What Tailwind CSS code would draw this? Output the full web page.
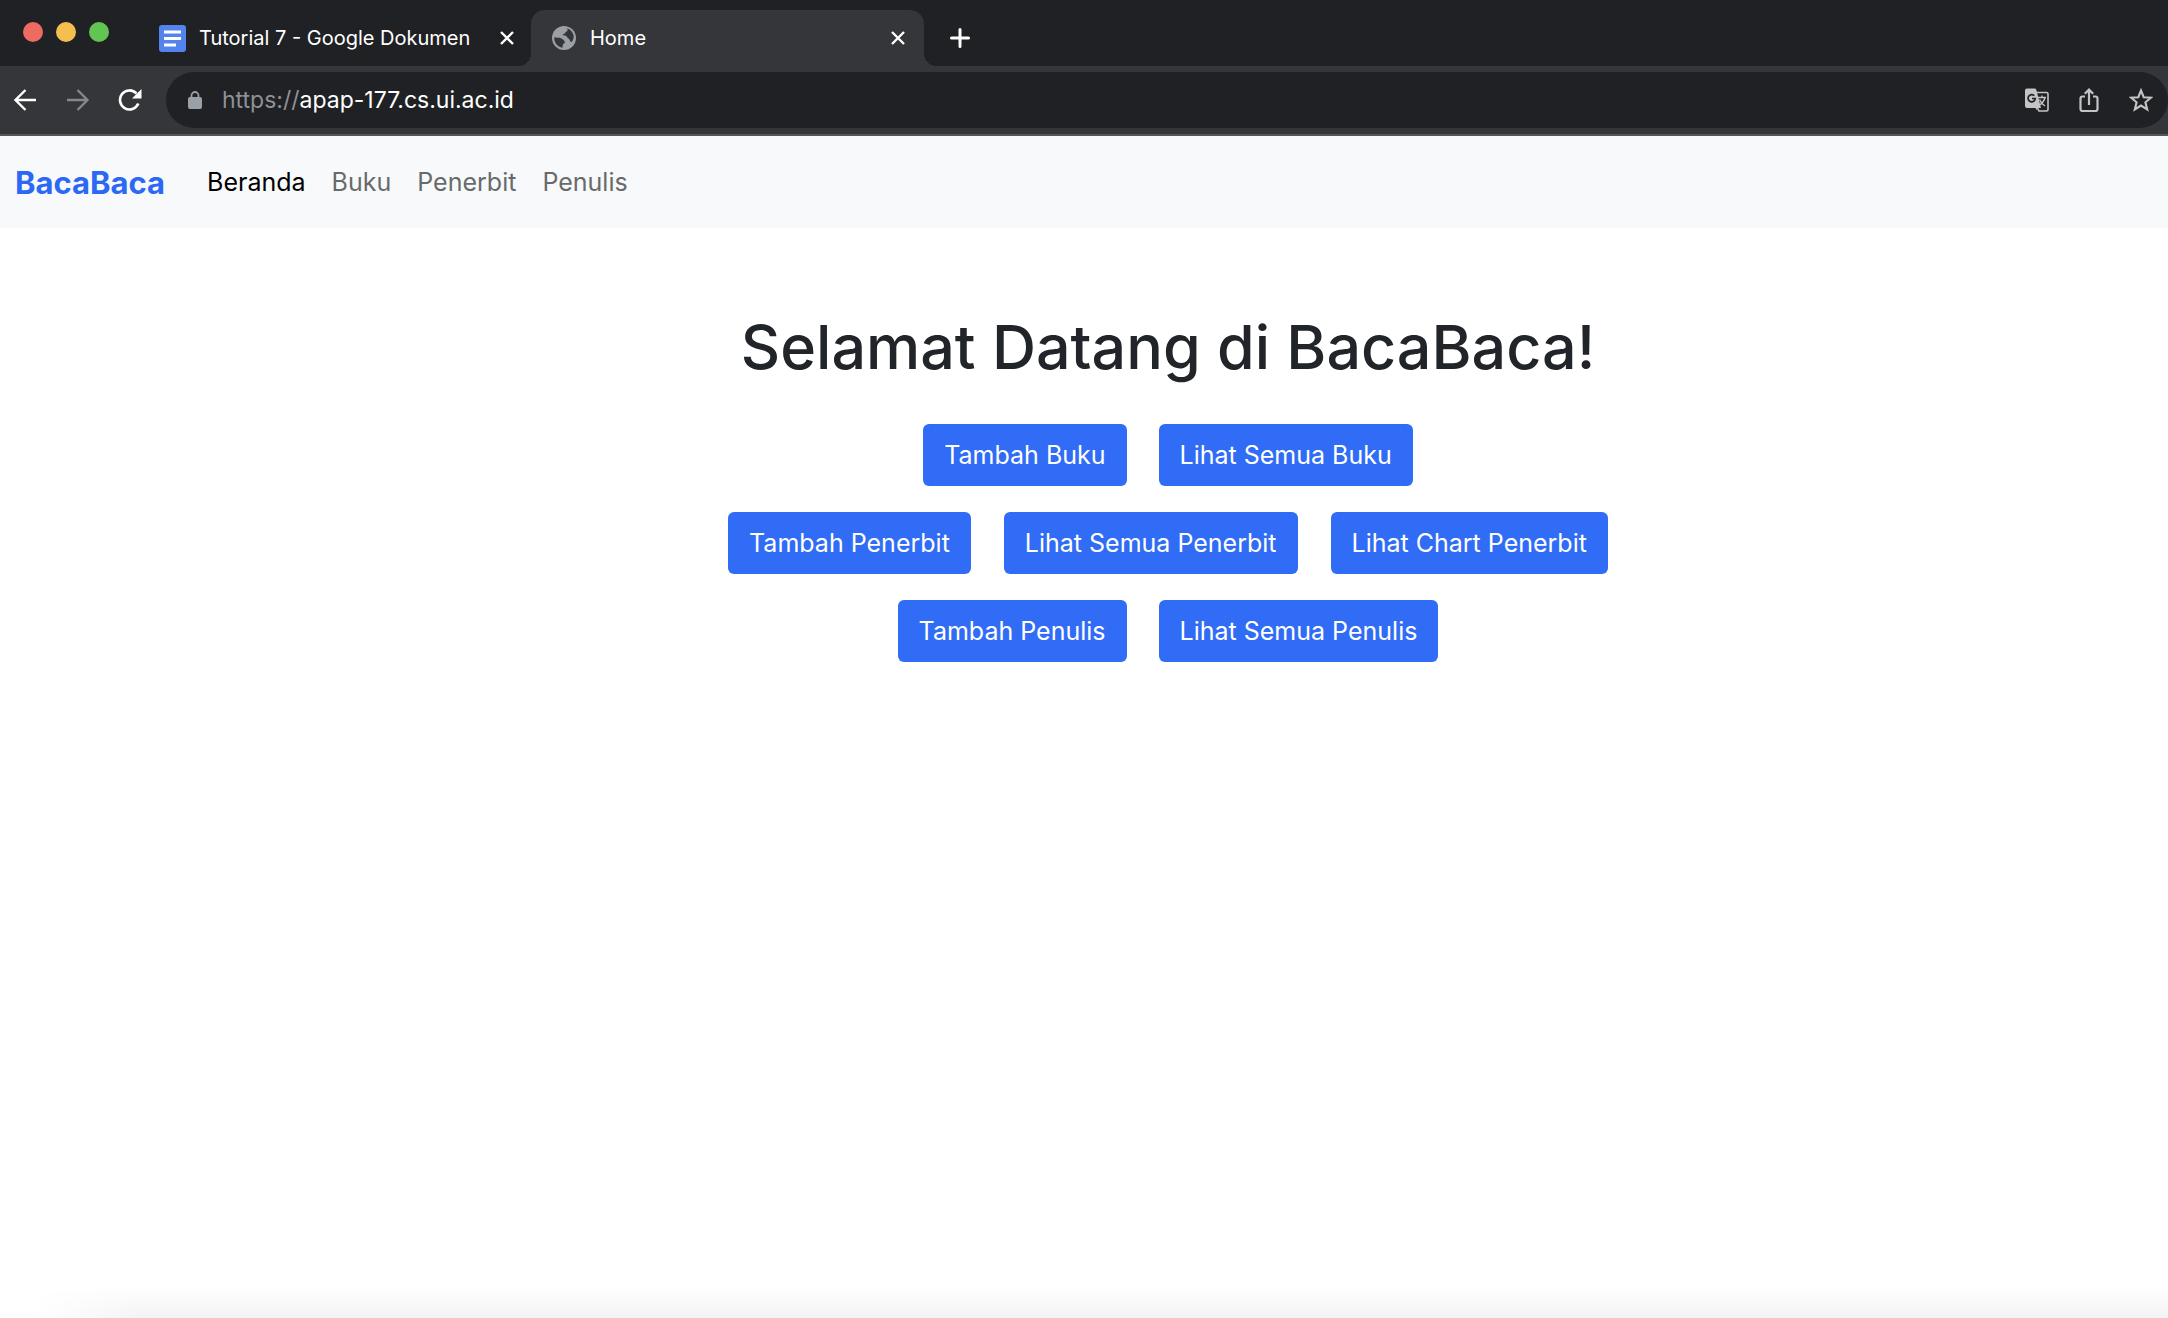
<!DOCTYPE html>
<html lang="id">
<head>
<meta charset="utf-8">
<title>Home</title>
<script src="https://cdn.jsdelivr.net/npm/@tailwindcss/browser@4"></script>
</head>
<body class="flex min-h-screen flex-col overflow-x-hidden bg-white font-['Inter',sans-serif] text-[#212529]">
  <header class="flex flex-col bg-[#35363a] text-white">
    <div class="flex h-[66px] items-stretch bg-[#202124]">
      <div class="flex items-center gap-[13px] pb-0.5 pl-[23px]">
        <span class="size-5 rounded-full bg-[#ed6b60]"></span>
        <span class="size-5 rounded-full bg-[#f5bf4f]"></span>
        <span class="size-5 rounded-full bg-[#61c554]"></span>
      </div>
      <div class="ml-[50px] flex w-[372px] items-center pt-2.5">
        <svg class="size-[27px]" viewBox="0 0 27 27"><rect width="27" height="27" rx="3" fill="#5383ec"/><path d="M5 7h17M5 13.500h17M5 20h12" stroke="#fff" stroke-width="3"/></svg>
        <span class="ml-[13px] text-xl whitespace-nowrap">Tutorial 7 - Google Dokumen</span>
        <button class="mr-[17px] ml-auto" aria-label="Tutup tab"><svg class="size-3.5" viewBox="0 0 14 14" fill="none" stroke="#fff" stroke-width="2.4"><path d="M1 1l12 12M13 1L1 13"/></svg></button>
      </div>
      <div class="relative mt-2.5 flex w-[393px] items-center rounded-t-[14px] bg-[#35363a] pb-px pl-[21px]">
        <span class="absolute bottom-0 -left-3 size-3 bg-[radial-gradient(circle_at_0_0,transparent_12px,#35363a_12px)]"></span>
        <span class="absolute -right-3 bottom-0 size-3 bg-[radial-gradient(circle_at_100%_0,transparent_12px,#35363a_12px)]"></span>
        <svg class="size-6" viewBox="0 0 24 24"><circle cx="12" cy="12" r="12" fill="#9aa0a6"/><path d="M13.500 2.300C16.500 3 16 5 14.500 5.500C13 6 13.500 7.500 12 8C10 8.500 10.500 9.500 12.500 9.500C15 9.500 15 12 16.500 12.500C18 13 17.500 15.500 19.500 16.200C21.500 13.500 22 11.500 21.500 9C20 4.500 17 2.700 13.500 2.300ZM2.300 11.300C4.500 12 7 11.300 9.500 12.500C12 13.800 12 15 13 16C13 17.500 11 17.500 10.800 19C10.600 20.500 10.500 21 10.500 21.700C5.500 20.800 2 17 2.300 11.300Z" fill="#35363a"/></svg>
        <span class="ml-3.5 text-xl">Home</span>
        <button class="mr-[19px] ml-auto" aria-label="Tutup tab"><svg class="size-3.5" viewBox="0 0 14 14" fill="none" stroke="#fff" stroke-width="2.4"><path d="M1 1l12 12M13 1L1 13"/></svg></button>
      </div>
      <button class="ml-[26px] pt-2.5" aria-label="Tab baru"><svg class="size-5" viewBox="0 0 20 20" fill="none" stroke="#fff" stroke-width="3" stroke-linecap="round"><path d="M10 1.500v17M1.500 10h17"/></svg></button>
    </div>
    <div class="flex items-center border-b-2 border-[#555659] py-1.5">
      <div class="flex w-[166px] shrink-0 items-center gap-7 pl-3.5">
        <button aria-label="Kembali"><svg class="size-6" viewBox="0 0 24 24" fill="none" stroke="#fff" stroke-width="2.300"><path d="M22 12H2M11.500 2L1.500 12l10 10"/></svg></button>
        <button aria-label="Maju"><svg class="size-6" viewBox="0 0 24 24" fill="none" stroke="#87888a" stroke-width="2.300"><path d="M1 12h20M11.500 2l10 10-10 10"/></svg></button>
        <button aria-label="Muat ulang"><svg class="size-6" viewBox="0 0 24 24" fill="none" stroke="#fff" stroke-width="2.600"><path d="M20.300 15.500A9.500 9.500 0 1 1 18.500 5.500"/><path d="M23.500 1v9.500H14z" fill="#fff" stroke="none"/></svg></button>
      </div>
      <div class="flex h-14 grow items-center rounded-full bg-[#202124] pr-[15px] pl-[22px]">
        <svg class="h-[18px] w-3.5" viewBox="0 0 14 18"><rect y="6" width="14" height="12" rx="2" fill="#9aa0a6"/><path d="M3.500 7V4.500a3.500 3.500 0 0 1 7 0V7" fill="none" stroke="#9aa0a6" stroke-width="1.800"/></svg>
        <div class="ml-5 flex grow text-[23px] leading-8"><label for="url" class="text-[#8f9194]">https://</label><input id="url" class="grow bg-transparent outline-none" value="apap-177.cs.ui.ac.id"></div>
        <div class="flex items-center gap-7">
          <button aria-label="Terjemahkan"><svg class="size-6" viewBox="0 0 24 24"><path d="M12 4.500h9.500a1.500 1.500 0 0 1 1.500 1.500v15.500a1.500 1.500 0 0 1-1.500 1.500H14l-2-4" fill="none" stroke="#c4c4c4" stroke-width="1.600"/><path d="M2 .5h7.500a2 2 0 0 1 1.900 1.400L16 20h-4v2.500L10.500 20H2a2 2 0 0 1-2-2V2.500a2 2 0 0 1 2-2z" fill="#c4c4c4"/><path d="M9.300 7.700A3.600 3.600 0 1 0 10.300 10.500H7" fill="none" stroke="#202124" stroke-width="1.700"/><path d="M13 9.500h8M17 7.500v2M20 9.500c-1 4-3 6-5.500 7.500M14.500 11.500c1 2.500 3 5 5.500 6.500" fill="none" stroke="#c4c4c4" stroke-width="1.400"/></svg></button>
          <button aria-label="Bagikan"><svg class="size-6" viewBox="0 0 24 24" fill="none" stroke="#c4c4c4" stroke-width="2.200"><path d="M8 8.500H5.500a2 2 0 0 0-2 2V21a2 2 0 0 0 2 2h13a2 2 0 0 0 2-2V10.500a2 2 0 0 0-2-2H16M12 17V2M7.800 5.800L12 1.600l4.200 4.200"/></svg></button>
          <button aria-label="Tandai"><svg class="size-6" viewBox="0 0 24 24" fill="none" stroke="#c4c4c4" stroke-width="2.100"><path d="M12 2.500l2.700 6.700 7.200.5-5.500 4.600 1.800 7.200L12 17.600l-6.200 3.900 1.800-7.200L2.100 9.700l7.200-.5z"/></svg></button>
        </div>
      </div>
    </div>
  </header>
  <nav class="flex h-[92px] items-center bg-[#f8f9fb] pt-0.5 pl-[15px] text-[25px]">
    <a href="#" class="mr-[42px] text-[31px] font-bold text-[#2b69f5]">BacaBaca</a>
    <div class="flex gap-[26px] text-[#696a6b]">
      <a href="#" class="text-black">Beranda</a>
      <a href="#">Buku</a>
      <a href="#">Penerbit</a>
      <a href="#">Penulis</a>
    </div>
  </nav>
  <main class="flex grow flex-col items-center gap-[26px] pt-[79px] pl-[168px]">
    <h1 class="mb-[11px] text-[61px] leading-20 font-medium whitespace-nowrap">Selamat Datang di BacaBaca!</h1>
    <div class="flex gap-8">
      <button class="h-[62px] rounded-md bg-[#306cf5] px-[21px] pt-0.5 text-[25px] whitespace-nowrap text-white">Tambah Buku</button>
      <button class="h-[62px] rounded-md bg-[#306cf5] px-[21px] pt-0.5 text-[25px] whitespace-nowrap text-white">Lihat Semua Buku</button>
    </div>
    <div class="flex gap-[33px]">
      <button class="h-[62px] rounded-md bg-[#306cf5] px-[21px] pt-0.5 text-[25px] whitespace-nowrap text-white">Tambah Penerbit</button>
      <button class="h-[62px] rounded-md bg-[#306cf5] px-[21px] pt-0.5 text-[25px] whitespace-nowrap text-white">Lihat Semua Penerbit</button>
      <button class="h-[62px] rounded-md bg-[#306cf5] px-[21px] pt-0.5 text-[25px] whitespace-nowrap text-white">Lihat Chart Penerbit</button>
    </div>
    <div class="flex gap-8">
      <button class="h-[62px] rounded-md bg-[#306cf5] px-[21px] pt-0.5 text-[25px] whitespace-nowrap text-white">Tambah Penulis</button>
      <button class="h-[62px] rounded-md bg-[#306cf5] px-[21px] pt-0.5 text-[25px] whitespace-nowrap text-white">Lihat Semua Penulis</button>
    </div>
  </main>
  <div class="ml-8 h-8 bg-linear-to-b from-white to-[#f3f3f3] mask-l-from-[95%]"></div>
</body>
</html>
